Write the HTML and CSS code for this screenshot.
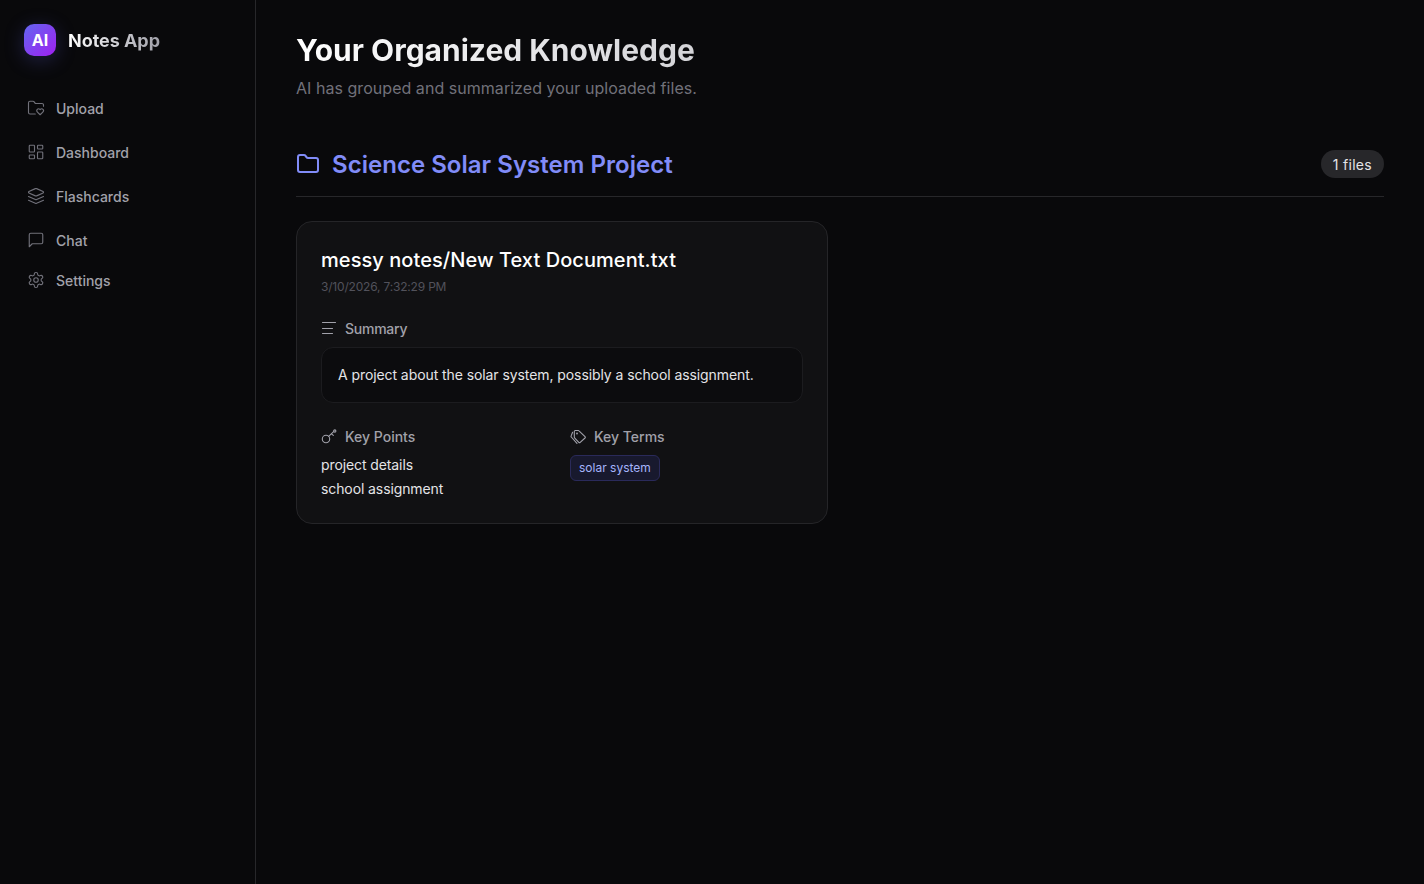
FILE: index.html
```html
<!DOCTYPE html>
<html lang="en">
<head>
<meta charset="utf-8">
<title>Notes App</title>
<link rel="stylesheet" href="styles.css">
</head>
<body>
<div class="app">
  <aside class="sidebar">
    <div class="brand">
      <div class="logo">AI</div>
      <span class="brand-name">Notes App</span>
    </div>
    <nav class="nav">
      <a class="nav-item"><svg class="icon" viewBox="0 0 24 24"><path d="M11 20H4a2 2 0 0 1-2-2V5a2 2 0 0 1 2-2h3.9a2 2 0 0 1 1.69.9l.81 1.2a2 2 0 0 0 1.67.9H20a2 2 0 0 1 2 2v1.5"/><path d="M13.9 17.45c-1.2-1.2-1.14-2.8-.2-3.73a2.43 2.43 0 0 1 3.44 0l.36.34.34-.34a2.43 2.43 0 0 1 3.45-.01c.95.95 1 2.53-.2 3.74L17.5 21Z"/></svg>Upload</a>
      <a class="nav-item"><svg class="icon" viewBox="0 0 24 24"><rect x="3" y="3" width="7" height="9" rx="1"/><rect x="14" y="3" width="7" height="5" rx="1"/><rect x="14" y="12" width="7" height="9" rx="1"/><rect x="3" y="16" width="7" height="5" rx="1"/></svg>Dashboard</a>
      <a class="nav-item"><svg class="icon" viewBox="0 0 24 24"><path d="m12.83 2.18a2 2 0 0 0-1.66 0L2.6 6.08a1 1 0 0 0 0 1.83l8.58 3.91a2 2 0 0 0 1.66 0l8.58-3.9a1 1 0 0 0 0-1.83Z"/><path d="m22 17.65-9.17 4.16a2 2 0 0 1-1.66 0L2 17.65"/><path d="m22 12.65-9.17 4.16a2 2 0 0 1-1.66 0L2 12.65"/></svg>Flashcards</a>
      <a class="nav-item"><svg class="icon" viewBox="0 0 24 24"><path d="M21 15a2 2 0 0 1-2 2H7l-4 4V5a2 2 0 0 1 2-2h14a2 2 0 0 1 2 2z"/></svg>Chat</a>
      <a class="nav-item nav-item-last"><svg class="icon" viewBox="0 0 24 24"><path d="M12.22 2h-.44a2 2 0 0 0-2 2v.18a2 2 0 0 1-1 1.73l-.43.25a2 2 0 0 1-2 0l-.15-.08a2 2 0 0 0-2.73.73l-.22.38a2 2 0 0 0 .73 2.73l.15.1a2 2 0 0 1 1 1.72v.51a2 2 0 0 1-1 1.74l-.15.09a2 2 0 0 0-.73 2.73l.22.38a2 2 0 0 0 2.73.73l.15-.08a2 2 0 0 1 2 0l.43.25a2 2 0 0 1 1 1.73V20a2 2 0 0 0 2 2h.44a2 2 0 0 0 2-2v-.18a2 2 0 0 1 1-1.73l.43-.25a2 2 0 0 1 2 0l.15.08a2 2 0 0 0 2.73-.73l.22-.39a2 2 0 0 0-.73-2.73l-.15-.08a2 2 0 0 1-1-1.74v-.5a2 2 0 0 1 1-1.74l.15-.09a2 2 0 0 0 .73-2.73l-.22-.38a2 2 0 0 0-2.73-.73l-.15.08a2 2 0 0 1-2 0l-.43-.25a2 2 0 0 1-1-1.73V4a2 2 0 0 0-2-2z"/><circle cx="12" cy="12" r="3"/></svg>Settings</a>
    </nav>
  </aside>
  <main class="main">
    <h1 class="title">Your Organized Knowledge</h1>
    <p class="subtitle">AI has grouped and summarized your uploaded files.</p>
    <section class="group">
      <header class="group-head">
        <h2 class="group-title"><svg class="icon icon-folder" viewBox="0 0 24 24"><path d="M20 20a2 2 0 0 0 2-2V8a2 2 0 0 0-2-2h-7.9a2 2 0 0 1-1.69-.9L9.6 3.9A2 2 0 0 0 7.93 3H4a2 2 0 0 0-2 2v13a2 2 0 0 0 2 2Z"/></svg>Science Solar System Project</h2>
        <span class="count">1 files</span>
      </header>
      <div class="cards">
        <article class="card">
          <h3 class="card-title">messy notes/New Text Document.txt</h3>
          <div class="card-date">3/10/2026, 7:32:29 PM</div>
          <div class="label label-summary"><svg class="icon icon-sm" viewBox="0 0 16 16"><path d="M1.5 1.5H14.5"/><path d="M1.5 7.5H11.5"/><path d="M1.5 12.5H11.5"/></svg>Summary</div>
          <div class="summary">A project about the solar system, possibly a school assignment.</div>
          <div class="columns">
            <div>
              <div class="label"><svg class="icon icon-sm" viewBox="0 0 16 16"><circle cx="5" cy="10" r="3.7"/><path d="M7.7 7.4 12.6 2.6"/><circle cx="13.8" cy="2" r="1.1"/><path d="M10.5 4.8 12.3 6.4"/></svg>Key Points</div>
              <ul class="points"><li>project details</li><li>school assignment</li></ul>
            </div>
            <div>
              <div class="label"><svg class="icon icon-sm" viewBox="0 0 16 16"><path d="M5.5 1.5H8.3a1 1 0 0 1 .7.3L15 7.6a1 1 0 0 1 0 1.4L10.2 13.3a1 1 0 0 1-1.4 0L4.6 8.8a1 1 0 0 1-.3-.7V2.7a1 1 0 0 1 1.2-1.2z"/><path d="M2.6 3.2 1.1 6.9a1 1 0 0 0 .2 1.1L7 14.4"/><circle cx="7" cy="4.5" r=".4"/></svg>Key Terms</div>
              <span class="tag">solar system</span>
            </div>
          </div>
        </article>
      </div>
    </section>
  </main>
</div>
</body>
</html>
```
FILE: styles.css
```css
* { box-sizing: border-box; }
html, body { margin: 0; height: 100%; }
body {
  background: #09090b;
  color: #fafafa;
  font-family: Inter, "Liberation Sans", sans-serif;
  overflow: hidden;
}
.app { display: flex; height: 884px; }
.sidebar {
  width: 256px;
  flex: none;
  padding: 24px;
  border-right: 1px solid #27272a;
  background: #09090b;
}
.brand { display: flex; align-items: center; gap: 12px; margin-bottom: 34px; }
.logo {
  width: 32px;
  height: 32px;
  border-radius: 10px;
  background: linear-gradient(135deg, #6366f1, #a020f0);
  box-shadow: 0 4px 20px rgba(99, 102, 241, .25);
  color: #fff;
  font-weight: 700;
  font-size: 16px;
  display: flex;
  align-items: center;
  justify-content: center;
}
.brand-name {
  font-size: 18px;
  font-weight: 700;
  letter-spacing: -0.05px;
  background: linear-gradient(90deg, #fff, #a1a1aa);
  -webkit-background-clip: text;
  background-clip: text;
  color: transparent;
}
.nav { display: flex; flex-direction: column; gap: 8px; }
.nav-item {
  display: flex;
  align-items: center;
  gap: 11px;
  height: 36px;
  padding: 0 3px;
  color: #a1a1aa;
  font-size: 14px;
  font-weight: 500;
}
.nav-item-last { margin-top: -4px; }
.icon {
  width: 18px;
  height: 18px;
  fill: none;
  stroke: #71717a;
  stroke-width: 1.5;
  stroke-linecap: round;
  stroke-linejoin: round;
  flex: none;
}
.main { flex: 1; padding: 32px 40px; min-width: 0; }
.title {
  margin: 0;
  font-size: 30px;
  line-height: 36px;
  font-weight: 700;
  width: max-content;
  background: linear-gradient(90deg, #fff, #d4d4d8);
  -webkit-background-clip: text;
  background-clip: text;
  color: transparent;
}
.subtitle { margin: 8px 0 0; font-size: 16px; line-height: 24px; letter-spacing: 0.04px; color: #71717a; }
.group { margin-top: 50px; }
.group-head {
  display: flex;
  align-items: flex-start;
  justify-content: space-between;
  padding-bottom: 16px;
  border-bottom: 1px solid #27272a;
  margin-bottom: 24px;
}
.group-title {
  margin: 0;
  display: flex;
  align-items: center;
  gap: 12px;
  font-size: 24px;
  line-height: 30px;
  font-weight: 600;
  letter-spacing: 0.03px;
  color: #818cf8;
}
.icon-folder { width: 24px; height: 24px; stroke: #818cf8; stroke-width: 2; margin-top: -2px; }
.count {
  background: #27272a;
  color: #e4e4e7;
  font-size: 14px;
  line-height: 20px;
  letter-spacing: 0.3px;
  padding: 5px 12px 3px;
  border-radius: 14px;
}
.cards { display: grid; grid-template-columns: repeat(2, 1fr); gap: 24px; }
.card {
  background: #111113;
  border: 1px solid #252528;
  border-radius: 16px;
  padding: 24px;
}
.card-title { margin: 0; font-size: 20px; line-height: 28px; font-weight: 500; letter-spacing: 0.06px; color: #fff; }
.card-date { margin-top: 5px; font-size: 12px; line-height: 16px; letter-spacing: -0.19px; color: #52525b; }
.label {
  display: flex;
  align-items: center;
  gap: 8px;
  font-size: 14px;
  line-height: 20px;
  font-weight: 500;
  color: #a1a1aa;
  margin-bottom: 8px;
}
.icon-sm { width: 16px; height: 16px; stroke: #a1a1aa; stroke-width: 1.1; }
.label-summary { margin-top: 24px; letter-spacing: -0.25px; }
.summary {
  background: #0c0c0e;
  border: 1px solid #1c1c1f;
  border-radius: 12px;
  padding: 16px;
  font-size: 14px;
  line-height: 22px;
  letter-spacing: -0.08px;
  color: #e4e4e7;
}
.columns { display: grid; grid-template-columns: 1fr 1fr; gap: 16px; margin-top: 24px; }
.points { list-style: none; margin: 0; padding: 0; display: flex; flex-direction: column; gap: 4px; font-size: 14px; line-height: 20px; letter-spacing: -0.1px; color: #e4e4e7; }
.tag {
  display: inline-block;
  background: #18192e;
  border: 1px solid #2a2a5a;
  border-radius: 6px;
  padding: 4px 8px;
  font-size: 12px;
  line-height: 16px;
  color: #a5b4fc;
}
```
